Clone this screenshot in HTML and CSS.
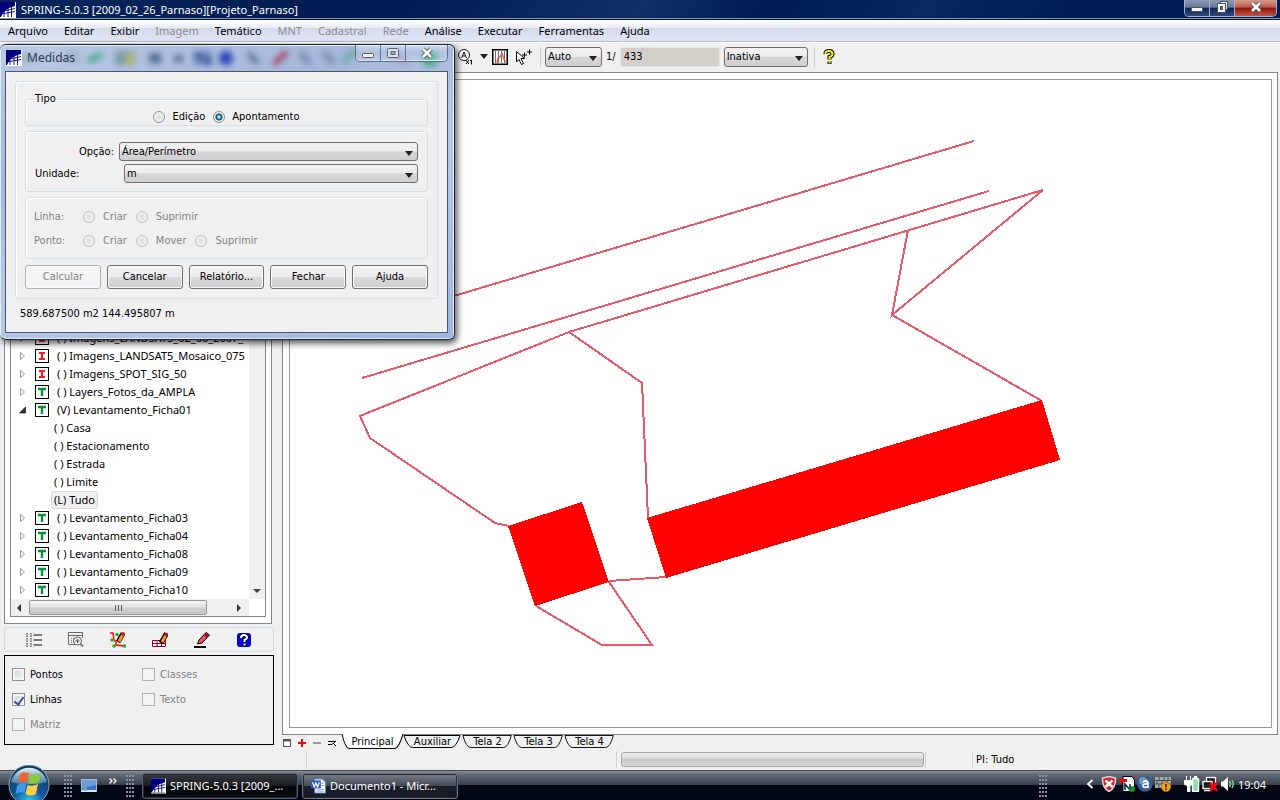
FILE: index.html
```html
<!DOCTYPE html>
<html lang="pt">
<head>
<meta charset="utf-8">
<title>SPRING-5.0.3</title>
<link rel="stylesheet" href="styles.css">
</head>
<body>
<svg class="defs" aria-hidden="true">
  <symbol id="logo" viewBox="0 0 16 16"><rect width="16" height="16" fill="#fff"/><rect width="15" height="15" fill="#00007c"/><path d="M1 15Q3 7 15 4V15Z" fill="#fff"/><path d="M4 8.500V15M8 5.500V15M11.500 4.500V15M1 12L15 9.500M4 9L15 6.500" stroke="#00007c" stroke-width=".9" fill="none"/></symbol>
  <symbol id="t" viewBox="0 0 14 14"><rect x=".5" y=".5" width="13" height="13" fill="#fff" stroke="#000"/><path d="M3 4H11M7 4V11" stroke="#0a9038" stroke-width="2.400"/></symbol>
  <symbol id="i" viewBox="0 0 14 14"><rect x=".5" y=".5" width="13" height="13" fill="#fff" stroke="#000"/><path d="M4 4H10M7 4V10M4 10H10" stroke="#ee2028" stroke-width="2.200"/></symbol>
  <symbol id="closed" viewBox="0 0 8 10"><path d="M1.500 1.500V8.500L5.500 5Z" fill="#fff" stroke="#999"/></symbol>
  <symbol id="open" viewBox="0 0 8 10"><path d="M6.500 2V8H.5Z" fill="#333" stroke="#000" stroke-width=".6"/></symbol>
  <symbol id="min" viewBox="0 0 14 12"><rect x="1.500" y="6.500" width="11" height="4" rx="1" fill="#f4f4f4" stroke="#4c5261"/></symbol>
  <symbol id="cross" viewBox="0 0 14 12"><path d="M3 2L11 10M11 2L3 10" stroke="#4c5261" stroke-width="4.500"/><path d="M3 2L11 10M11 2L3 10" stroke="#fff" stroke-width="2.600"/></symbol>
</svg>

<header class="titlebar">
  <svg class="logo"><use href="#logo"/></svg>
  <span>SPRING-5.0.3 [2009_02_26_Parnaso][Projeto_Parnaso]</span>
  <div class="controls controls-main">
    <button aria-label="Minimizar"><svg><use href="#min"/></svg></button>
    <button aria-label="Restaurar"><svg viewBox="0 0 14 12"><rect x="5.500" y=".5" width="7" height="8" fill="#eee" stroke="#4c5261"/><rect x="2.500" y="2.500" width="8" height="9" fill="#f5f5f5" stroke="#4c5261"/><rect x="5.500" y="5.500" width="2" height="3" fill="#889" stroke="#4c5261"/></svg></button>
    <button class="close" aria-label="Fechar janela"><svg><use href="#cross"/></svg></button>
  </div>
</header>

<nav class="menubar">
  <button>Arquivo</button><button>Editar</button><button>Exibir</button><button disabled>Imagem</button><button>Temático</button><button disabled>MNT</button><button disabled>Cadastral</button><button disabled>Rede</button><button>Análise</button><button>Executar</button><button>Ferramentas</button><button>Ajuda</button>
</nav>

<div class="toolbar">
  <button class="tool" aria-label="Ampliar escala"><svg class="ico16" viewBox="0 0 16 16"><circle cx="6" cy="6" r="5.500" fill="#fff" stroke="#111"/><path d="M3.500 9L6 3L8.500 9M4.500 7H7.500" fill="none" stroke="#111"/><path d="M8 11L11 15M11 11L8 15M12 12L13.500 11V15.500" stroke="#111" fill="none"/></svg></button>
  <button class="tool drop" aria-label="Mais escalas"></button>
  <button class="tool" aria-label="Histograma"><svg class="ico16" viewBox="0 0 16 16"><rect x=".75" y=".75" width="14.500" height="14.500" fill="#fff" stroke="#000" stroke-width="1.500"/><path d="M3.500 2V14M6.500 2V14M9.500 2V14M12.500 2V14" stroke="#5565b8"/><path d="M5 14L6 9L8 8L10 4L12 10L13.500 13" fill="none" stroke="#e8631c" stroke-width="1.400"/></svg></button>
  <button class="tool" aria-label="Cursor de pontos"><svg class="ico16" viewBox="0 0 16 16"><path d="M.5 2.500V13L3 10.500L5.500 15.500L7.500 14.500L5 9.500H8.500Z" fill="#fff" stroke="#000"/><path d="M6 6H11M8.500 3.500V8.500M11 3H16M13.500 .5V5.500" stroke="#000"/></svg></button>
  <i class="sep"></i>
  <span class="combo scale"><select aria-label="Escala"><option>Auto</option></select></span>
  <label for="den">1/</label>
  <input id="den" class="den" value="433">
  <span class="combo state"><select aria-label="Estado"><option>Inativa</option></select></span>
  <i class="sep"></i>
  <button class="tool" aria-label="Ajuda contextual"><svg class="help" viewBox="0 0 12 16"><path d="M2.500 5Q2 2 6 2Q9.500 2 9.500 5Q9.500 7 6.500 8V10.500M6.500 12.500V15" fill="none" stroke="#000" stroke-width="4"/><path d="M2.500 5Q2 2 6 2Q9.500 2 9.500 5Q9.500 7 6.500 8V10.500M6.500 12.500V14.500" fill="none" stroke="#fff000" stroke-width="2"/></svg></button>
</div>

<main class="workspace">
  <aside class="side">
    <section class="treeframe">
      <div class="treebox">
        <div class="treeview">
          <ul class="tree">
            <li><svg class="tw"><use href="#closed"/></svg><svg class="cat"><use href="#i"/></svg>( ) Imagens_LANDSAT5_02_06_2007_</li>
            <li><svg class="tw"><use href="#closed"/></svg><svg class="cat"><use href="#i"/></svg>( ) Imagens_LANDSAT5_Mosaico_075</li>
            <li><svg class="tw"><use href="#closed"/></svg><svg class="cat"><use href="#i"/></svg>( ) Imagens_SPOT_SIG_50</li>
            <li><svg class="tw"><use href="#closed"/></svg><svg class="cat"><use href="#t"/></svg>( ) Layers_Fotos_da_AMPLA</li>
            <li><svg class="tw"><use href="#open"/></svg><svg class="cat"><use href="#t"/></svg>(V) Levantamento_Ficha01</li>
            <li class="child"><span>( ) Casa</span></li>
            <li class="child"><span>( ) Estacionamento</span></li>
            <li class="child"><span>( ) Estrada</span></li>
            <li class="child"><span>( ) Limite</span></li>
            <li class="child"><span class="selected">(L) Tudo</span></li>
            <li><svg class="tw"><use href="#closed"/></svg><svg class="cat"><use href="#t"/></svg>( ) Levantamento_Ficha03</li>
            <li><svg class="tw"><use href="#closed"/></svg><svg class="cat"><use href="#t"/></svg>( ) Levantamento_Ficha04</li>
            <li><svg class="tw"><use href="#closed"/></svg><svg class="cat"><use href="#t"/></svg>( ) Levantamento_Ficha08</li>
            <li><svg class="tw"><use href="#closed"/></svg><svg class="cat"><use href="#t"/></svg>( ) Levantamento_Ficha09</li>
            <li><svg class="tw"><use href="#closed"/></svg><svg class="cat"><use href="#t"/></svg>( ) Levantamento_Ficha10</li>
          </ul>
          <div class="vscroll"><i class="arrow down"></i></div>
        </div>
        <div class="hscroll"><i class="arrow left"></i><div class="thumb"><i></i><i></i><i></i></div><i class="arrow right"></i></div>
      </div>
    </section>
    <div class="sidetools">
      <button class="tool" aria-label="Lista"><svg class="ico16" viewBox="0 0 16 16"><path d="M.5 1.500H2M4 1.500H5.500M.5 4.500H2M4 4.500H5.500M.5 6.500H2M4 6.500H5.500M.5 9.500H2M4 9.500H5.500M.5 11.500H2M4 11.500H5.500M.5 14.500H2M4 14.500H5.500M1 1V5M5 1V5M1 6V10M5 6V10M1 11V15M5 11V15" stroke="#777"/><path d="M7.500 3H16M7.500 8H16M7.500 13H16" stroke="#555" stroke-width="1.600"/></svg></button>
      <button class="tool" aria-label="Consultar tabela"><svg class="ico16" viewBox="0 0 16 16"><path d="M.5 .5H14.500V6M.5 .5V12.500H8M.5 3.500H14.500" fill="none" stroke="#666"/><path d="M3 6.500H7M3 8.500H6M3 10.500H6" stroke="#777" stroke-dasharray="1 1"/><circle cx="9.500" cy="9" r="4" fill="#eee" stroke="#666"/><path d="M7.500 9H11.500M9.500 7V11" stroke="#555"/><path d="M12.500 12L15 14.500" stroke="#777" stroke-width="2"/></svg></button>
      <button class="tool" aria-label="Editar vetores"><svg class="ico16" viewBox="0 0 16 16"><path d="M0 1H3L4 8L6 10V13L14 14" fill="none" stroke="#f00" stroke-width="1.500"/><g fill="#19b32d"><circle cx="7" cy="2.500" r="1.800"/><circle cx="2" cy="8" r="1.800"/><circle cx="4" cy="14" r="1.800"/><circle cx="14.500" cy="14" r="1.800"/></g><path d="M8 10L13 1.500" stroke="#000" stroke-width="5"/><path d="M9 9.500L13 2" stroke="#ff941c" stroke-width="3"/><path d="M12 3.500L14 .5" stroke="#b3261a" stroke-width="3"/></svg></button>
      <button class="tool" aria-label="Editar matriz"><svg class="ico16" viewBox="0 0 16 16"><path d="M.5 8.500H13.500V14.500H.5ZM.5 11.500H13.500M5 8.500V14.500M9.500 8.500V14.500" fill="#fff" stroke="#a00020"/><path d="M9 11L14.500 1.500" stroke="#000" stroke-width="5"/><path d="M10 10L14 3" stroke="#ff941c" stroke-width="3"/><path d="M13.500 4L15 1" stroke="#b3261a" stroke-width="3"/></svg></button>
      <button class="tool" aria-label="Editar"><svg class="ico16" viewBox="0 0 16 16"><path d="M0 15H12" stroke="#000" stroke-width="2"/><path d="M3.500 12L5 8L12 .5L15.500 3L8 11Z" fill="#f35460" stroke="#000"/><path d="M10 3L12 1L15 3L12.500 6Z" fill="#b0001c"/></svg></button>
      <button class="tool" aria-label="Ajuda"><svg class="ico16" viewBox="0 0 16 16"><rect x="1" y="1" width="14" height="14" rx="3" fill="#0000e0"/><path d="M5 6Q5 3 8 3Q11 3 11 5.500Q11 7 8.500 8V10M8.500 11.500V14" fill="none" stroke="#000" stroke-width="3.600"/><path d="M5 6Q5 3 8 3Q11 3 11 5.500Q11 7 8.500 8V10M8.500 11.500V13.500" fill="none" stroke="#fff" stroke-width="2"/></svg></button>
    </div>
    <fieldset class="layers">
      <label><input type="checkbox">Pontos</label>
      <label class="off"><input type="checkbox" disabled>Classes</label>
      <label><input type="checkbox" checked>Linhas</label>
      <label class="off"><input type="checkbox" disabled>Texto</label>
      <label class="off"><input type="checkbox" disabled>Matriz</label>
    </fieldset>
  </aside>

  <section class="view">
    <div class="mapframe"><div class="map">
      <svg viewBox="290 80 981 647" preserveAspectRatio="xMinYMin slice" shape-rendering="crispEdges">
        <g fill="none" stroke="#e65966" stroke-width="2">
          <path d="M974 141L400 312M989 191L362 378"/>
          <path d="M1043 190L569 332L360 416L370 438L495 523L509 526M569 332L642 383L648 518"/>
          <path d="M908 230L892 315L1043 190M892 315L1042 401"/>
          <path d="M609 581L666 577M609 582L652 645H602L536 606"/>
        </g>
        <g fill="#f00"><path d="M647 518L1042 400L1060 460L666 578Z"/><path d="M508 526L582 502L609 582L535 606Z"/></g>
      </svg>
    </div></div>
    <div class="tabs">
      <button class="mini" aria-label="Janela"><svg viewBox="0 0 10 10"><rect x="1.500" y="1.500" width="7" height="7" fill="#fff" stroke="#555"/><path d="M1 2.500H9" stroke="#555" stroke-width="2"/></svg></button>
      <button class="mini" aria-label="Adicionar tela"><svg viewBox="0 0 10 10"><path d="M1 5H9M5 1V9" stroke="#f00" stroke-width="2"/></svg></button>
      <button class="mini" aria-label="Remover tela"><svg viewBox="0 0 10 10"><path d="M1 5H9" stroke="#999" stroke-width="2"/></svg></button>
      <button class="mini" aria-label="Alternar"><svg viewBox="0 0 10 10"><path d="M1 3.500H9M1 6.500H5L8 4M6 5L9 8" stroke="#000" fill="none"/></svg></button>
      <button class="tab active"><svg preserveAspectRatio="none" viewBox="0 0 60 14"><path d="M0 -1Q3 13 7 13.500H52Q56 13 60 -1" fill="#fff" stroke="#000"/></svg><span>Principal</span></button>
      <button class="tab aux"><svg preserveAspectRatio="none" viewBox="0 0 60 14"><path d="M1 .5Q5 12.500 10 12.500H49Q54 12.500 58 .5Z" fill="#f0f0f0" stroke="#000"/></svg><span>Auxiliar</span></button>
      <button class="tab"><svg preserveAspectRatio="none" viewBox="0 0 60 14"><path d="M1 .5Q5 12.500 10 12.500H49Q54 12.500 58 .5Z" fill="#f0f0f0" stroke="#000"/></svg><span>Tela 2</span></button>
      <button class="tab"><svg preserveAspectRatio="none" viewBox="0 0 60 14"><path d="M1 .5Q5 12.500 10 12.500H49Q54 12.500 58 .5Z" fill="#f0f0f0" stroke="#000"/></svg><span>Tela 3</span></button>
      <button class="tab"><svg preserveAspectRatio="none" viewBox="0 0 60 14"><path d="M1 .5Q5 12.500 10 12.500H49Q54 12.500 58 .5Z" fill="#f0f0f0" stroke="#000"/></svg><span>Tela 4</span></button>
    </div>
  </section>
</main>

<footer class="status">
  <i class="cell c1"></i><i class="cell c2"></i>
  <div class="cell c3"><div class="progress" role="progressbar" aria-label="Progresso"></div></div>
  <i class="cell c4"></i>
  <span class="cell c5">PI: Tudo</span>
</footer>

<div class="taskbar">
  <button class="orb" aria-label="Iniciar"><svg viewBox="0 0 42 36">
    <defs><radialGradient id="og" cx=".5" cy=".95" r=".85"><stop offset="0" stop-color="#3ad6ff"/><stop offset=".45" stop-color="#11599a"/><stop offset="1" stop-color="#12395e"/></radialGradient><linearGradient id="os" x2="0" y2="1"><stop stop-color="#e8f4fb"/><stop offset="1" stop-color="#6d9bbd" stop-opacity=".6"/></linearGradient></defs>
    <circle cx="21" cy="20" r="20" fill="url(#og)" stroke="#8da9bd"/><path d="M3 17A18.500 18.500 0 0 1 39 17Q21 22 3 17Z" fill="url(#os)"/>
    <path d="M12 9Q16 6 21 8L19 17Q14 15 10 18Z" fill="#f2642a"/><path d="M22 9Q27 11 33 8L31 17Q25 20 20 18Z" fill="#8dc63f"/><path d="M9.500 20Q14 17 18.500 19L16.500 28Q12 26 7.500 29Z" fill="#3f9be8"/><path d="M19.500 20Q24 22 30 19L28 29Q22 32 17.500 29Z" fill="#fdd045"/></svg></button>
  <i class="grip"></i>
  <button class="quick" aria-label="Mostrar área de trabalho"><svg viewBox="0 0 16 14"><rect x=".5" y=".5" width="15" height="12" fill="#3d6fc4" stroke="#a9bedb"/><path d="M1 1H15V6L1 9Z" fill="#6d9be0"/><rect x="1" y="11" width="14" height="2" fill="#d9e4ee"/><circle cx="4" cy="10" r="2" fill="#2ac0e8"/><circle cx="4" cy="10" r="1" fill="#f90"/></svg></button>
  <button class="chev" aria-label="Mais atalhos"><svg viewBox="0 0 8 6"><path d="M.5 .5L3 3L.5 5.500M4.500 .5L7 3L4.500 5.500" fill="none" stroke="#fff" stroke-width="1.300"/></svg></button>
  <i class="grip"></i>
  <button class="task current"><svg><use href="#logo"/></svg><span>SPRING-5.0.3 [2009_...</span></button>
  <button class="task"><svg viewBox="0 0 16 16"><path d="M4 .5H12L15.500 4V15.500H4Z" fill="#fff" stroke="#5a86cf"/><path d="M11 5H14M11 7.500H14M6 11.500H14M6 13.500H14" stroke="#79a0dd"/><rect x="0" y="2" width="10.500" height="8.500" fill="#2f5fbd"/><path d="M1.500 4L3.500 9L5.200 4.500L7 9L9 4" fill="none" stroke="#fff" stroke-width="1.200"/></svg><span>Documento1 - Micr...</span></button>
  <i class="grip push"></i>
  <div class="tray">
    <svg class="back" viewBox="0 0 8 10"><path d="M6.500 1L2 5L6.500 9" fill="none" stroke="#fff" stroke-width="1.800"/></svg>
    <svg viewBox="0 0 16 16"><path d="M8 .5L14.500 2Q15 12 8 15.500Q1 12 1.500 2Z" fill="#d2222a" stroke="#d8d8d8" stroke-width="1.500"/><path d="M4.500 4.500L11.500 11M11.500 4.500L4.500 11" stroke="#fff" stroke-width="2.400"/></svg>
    <svg viewBox="0 0 16 16"><path d="M5 .5H13L15.500 4V15.500H4V.5Z" fill="#fff" stroke="#000"/><rect x="0" y="3" width="8" height="3" fill="#f00"/><path d="M6 14V8L11 14V8" fill="none" stroke="#16163f" stroke-width="1.500"/><circle cx="13" cy="13" r="3" fill="#118a2e"/></svg>
    <svg viewBox="0 0 16 16"><circle cx="8" cy="8" r="7.800" fill="#315f91"/><circle cx="6" cy="5" r="4" fill="#6e96bf"/><path d="M6 6Q10.500 3.500 11 7V12M11 8Q6 7.500 6 10Q6.500 12.500 11 10.500" fill="none" stroke="#fff" stroke-width="1.800"/></svg>
    <svg viewBox="0 0 16 16"><path d="M0 1H16V12H0Z" fill="#a8abae"/><path d="M0 4.500H16M0 8H16M4 1V4.500M9 1V4.500M13 1V4.500M2 4.500V8M7 4.500V8M12 4.500V8M4 8V12" stroke="#41464d"/><circle cx="11" cy="11" r="4.700" fill="#f0a01a" stroke="#9b6000" stroke-width=".5"/><path d="M11 8V11.500M11 12.500V14" stroke="#3d2b00" stroke-width="1.600"/></svg>
    <svg class="gap" viewBox="0 0 16 16"><path d="M2.500 0V4M6.500 0V4M0 4.500H9V8L6 10V16H3.500V10L0 8Z" fill="#fff" stroke="#eee"/><rect x="8.500" y="2.500" width="6" height="13" rx="1" fill="#8de0a2" stroke="#fff" stroke-width="1.500"/><path d="M10 1H13" stroke="#fff" stroke-width="2"/></svg>
    <svg viewBox="0 0 16 16"><rect x="4.500" y="1.500" width="9" height="8" fill="#222" stroke="#fff" stroke-width="1.300"/><rect x="1" y="5.500" width="9" height="7" fill="#222" stroke="#fff" stroke-width="1.300"/><path d="M2 14.500H9" stroke="#fff" stroke-width="1.500"/><path d="M8 7L15 14.500M15 7L8 14.500" stroke="#f00" stroke-width="2.600"/></svg>
    <svg viewBox="0 0 16 16"><path d="M1 5.500H3L8 1V15L3 10.500H1Z" fill="#fff"/><path d="M9.500 5Q11.500 8 9.500 11M12 4Q14.500 8 12 12" fill="none" stroke="#7be29a" stroke-width="1.400"/></svg>
    <time>19:04</time>
  </div>
</div>

<div class="dialog" role="dialog" aria-labelledby="dlg">
  <svg class="ghost" viewBox="0 0 454 27" aria-hidden="true"><g>
    <path d="M16 10H34V18H16ZM64 6H78V18H64Z" fill="#75939c" opacity=".4"/><path d="M86 15L100 7L104 10L92 18Z" fill="#35a378"/><rect x="115" y="6" width="20" height="14" fill="#7c9ea4"/><path d="M127 10H133V19H127Z" fill="#ccc04d"/><path d="M149 8H161V18H149ZM174 10H183V17H174Z" fill="#536b94"/><rect x="194" y="6" width="18" height="14" fill="#6f88bd"/><path d="M194 8H202V14H194ZM204 13H212V20H204Z" fill="#3c5596"/><circle cx="226" cy="13" r="7" fill="#2a43b8"/><path d="M248 8L258 18" stroke="#445b84" stroke-width="4"/><path d="M274 19L287 7" stroke="#aa3150" stroke-width="5"/><path d="M300 8L310 18M324 8L334 18" stroke="#5d719a" stroke-width="4"/><path d="M345 18Q348 8 356 8" fill="none" stroke="#50a28b" stroke-width="4"/><path d="M392 8L407 18" stroke="#a98296" stroke-width="4"/><circle cx="430" cy="14" r="8" fill="#49aa83"/></g></svg>
  <div class="dlgtitle"><svg class="logo"><use href="#logo"/></svg><span id="dlg">Medidas</span>
    <div class="controls controls-dlg">
      <button aria-label="Minimizar"><svg><use href="#min"/></svg></button>
      <button aria-label="Maximizar"><svg viewBox="0 0 14 12"><rect x="1.500" y="1.500" width="11" height="9" rx="1" fill="#d9deea" stroke="#59647a"/><rect x="5" y="4.500" width="4" height="3" fill="#a4aec6" stroke="#59647a"/></svg></button>
      <button class="x" aria-label="Fechar"><svg><use href="#cross"/></svg></button>
    </div>
  </div>
  <form class="dlgbody">
    <div class="outer">
      <fieldset class="group tipo"><legend>Tipo</legend>
        <label><input type="radio" name="tipo">Edição</label>
        <label><input type="radio" name="tipo" checked>Apontamento</label>
      </fieldset>
      <div class="group options">
        <div class="field"><label class="op" for="op">Opção:</label><span class="combo"><select id="op"><option>Área/Perímetro</option></select></span></div>
        <div class="field"><label class="un" for="un">Unidade:</label><span class="combo"><select id="un"><option>m</option></select></span></div>
      </div>
      <div class="group edit">
        <div class="radios"><span>Linha:</span><label><input type="radio" name="linha" disabled>Criar</label><label><input type="radio" name="linha" disabled>Suprimir</label></div>
        <div class="radios"><span>Ponto:</span><label><input type="radio" name="ponto" disabled>Criar</label><label><input type="radio" name="ponto" disabled>Mover</label><label><input type="radio" name="ponto" disabled>Suprimir</label></div>
      </div>
      <div class="actions"><button type="button" disabled>Calcular</button><button type="button">Cancelar</button><button type="button">Relatório...</button><button type="button">Fechar</button><button type="button">Ajuda</button></div>
    </div>
    <output class="result">589.687500 m2 144.495807 m</output>
  </form>
</div>
</body>
</html>
```
FILE: styles.css
```css
* { box-sizing: border-box; }
body {
  --segoe: "Noto Sans", "Open Sans", sans-serif;
  --tahoma: "DejaVu Sans Condensed", "DejaVu Sans", sans-serif;
  margin: 0; height: 100vh; display: flex; flex-direction: column; overflow: hidden;
  background: #f0f0f0; color: #000; font: 11px/16px var(--tahoma);
}
button, input, select { font: inherit; color: inherit; margin: 0; padding: 0; }
button { background: none; border: 0; white-space: nowrap; }
svg { display: block; flex: none; }
.defs { position: absolute; width: 0; height: 0; }
.logo { width: 16px; height: 16px; }

.titlebar {
  flex: none; height: 20px; display: flex; gap: 5px; padding: 2px 3px 0 0;
  background: linear-gradient(120deg, #06265c, #001b52 30%, #102f66 50%, #001b52 60%, #082860 72%, #001b52 85%);
  border-bottom: 1px solid #111722; box-shadow: inset 0 -1px #8493b3;
  color: #fff; font: 11px/16px var(--segoe);
}
.controls { display: flex; margin-left: auto; border: 1px solid #a9b3c8; border-top: 0; border-radius: 0 0 5px 5px; overflow: hidden; }
.controls button { display: grid; place-items: center; width: 25px; border-right: 1px solid #a9b3c8; }
.controls .close, .controls .x { width: 41px; border-right: 0; }
.controls svg { width: 14px; height: 12px; }
.controls-main { height: 17px; margin-top: -2px; }
.controls-main svg { margin-top: -3px; }
.controls-main button { background: linear-gradient(#8b98b4, #6d7da0 45%, #0a2458 50%, #304a7d); }
.controls-main .close { background: linear-gradient(#d99a8e, #bb5a4c 45%, #8c140c 50%, #c25342); }

.menubar {
  flex: none; height: 22px; display: flex; gap: 16px; padding: 0 8px;
  background: linear-gradient(#fff, #e8ecf5 38%, #d4dbed 40%, #e0e6f6);
  border-bottom: 1px solid #b6bccc; font: 11px/22px var(--segoe);
}
.menubar button:disabled { color: #8d8d8d; }

.toolbar {
  flex: none; height: 30px; display: flex; align-items: center; gap: 4px; padding: 0 0 2px 456px;
  background: #f0f0f0; border-top: 1px solid #fff;
}
.tool { display: grid; place-items: center; }
.toolbar .tool { width: 20px; height: 20px; }
.ico16 { width: 16px; height: 16px; }
.help { width: 12px; height: 16px; }
.toolbar .drop { width: 6px; }
.drop::before, .combo::after { content: ""; border: 4px solid transparent; border-top: 5px solid #222; border-bottom: 0; }
.toolbar .sep { width: 1px; height: 20px; margin-left: 2px; background: #ccc; }
.combo { display: flex; position: relative; height: 20px; }
.combo::after { position: absolute; right: 5px; top: 9px; pointer-events: none; }
.combo select {
  appearance: none; width: 100%; padding: 0 2px; border: 1px solid #707070; border-radius: 3px;
  background: linear-gradient(#f3f3f3, #ebebeb 48%, #d6d6d6 52%, #cfcfcf);
}
.scale { width: 57px; }
.state { width: 84px; }
.den { width: 100px; height: 20px; padding: 0 3px; background: #d4d0c8; border: 1px solid #e2e6ee; }

.workspace { flex: 1; min-height: 0; display: flex; gap: 8px; }
.side { flex: none; width: 274px; display: flex; flex-direction: column; gap: 3px; padding: 0 0 4px 4px; }
.treeframe { flex: 1; min-height: 0; display: flex; width: 268px; padding: 6px 5px; background: #fff; border: 1px solid #828790; }
.treebox { flex: 1; min-width: 0; display: flex; flex-direction: column; border: 1px solid #828790; }
.treeview { flex: 1; min-height: 0; display: flex; }
.tree {
  flex: 1; min-width: 0; margin: 0; padding: 0; list-style: none; overflow: hidden;
  display: flex; flex-direction: column; justify-content: flex-end; font: 11px/18px var(--segoe);
}
.tree li { flex: none; height: 18px; display: flex; align-items: center; padding-left: 8px; white-space: nowrap; }
.tw { width: 8px; height: 10px; margin-right: 8px; }
.cat { width: 14px; height: 14px; margin-right: 8px; }
.tree .child { padding-left: 40px; }
.child span { padding: 0 2px; border: 1px solid transparent; line-height: 16px; }
.child .selected { background: #f0f0f0; border-color: #d5d5d5; border-radius: 3px; }
.vscroll { width: 16px; display: flex; justify-content: center; align-items: flex-end; padding-bottom: 6px; background: #f0f0f0; }
.arrow { border: 4px solid transparent; }
.down { border-top-color: #444; border-bottom: 0; }
.left { border-right-color: #333; border-left: 0; }
.right { border-left-color: #333; border-right: 0; }
.hscroll { height: 17px; display: flex; align-items: center; padding: 1px 24px 1px 6px; background: linear-gradient(90deg, #f0f0f0 238px, #fff 238px); }
.thumb { width: 178px; height: 15px; margin: 0 auto 0 8px; display: flex; gap: 2px; justify-content: center; align-items: center; border: 1px solid #959595; border-radius: 2px; background: linear-gradient(#f3f3f3, #e4e4e4 48%, #d0d0d0 52%, #c8c8c8); }
.thumb i { width: 1px; height: 6px; background: #555; }
.sidetools { flex: none; width: 270px; height: 25px; display: flex; gap: 26px; padding-left: 21px; border: 1px solid #d0dbe4; border-radius: 3px; }
.layers { flex: none; margin: 0; width: 270px; height: 90px; padding: 6px 7px 5px; border: 1px solid #000; display: grid; grid-template-columns: 130px 1fr; grid-auto-rows: 25px; align-items: center; }
.layers label { display: flex; align-items: center; gap: 5px; }
.off, .edit, .actions button:disabled { color: #838383; }
input[type=checkbox] { appearance: none; width: 13px; height: 13px; border: 1px solid #8e8f8f; background: linear-gradient(135deg, #cfd3d6, #f6f6f6); box-shadow: inset 0 0 0 2px #f4f4f4; display: grid; place-items: center; }
input[type=checkbox]:checked::before { content: ""; width: 4px; height: 8px; border: solid #32508f; border-width: 0 2px 2px 0; transform: rotate(35deg); }
input[type=checkbox]:disabled { border-color: #b1b1b1; background: #f4f4f4; }

.view { flex: 1; min-width: 0; display: flex; flex-direction: column; padding-right: 2px; }
.mapframe { flex: 1; min-height: 0; display: flex; padding: 6px 5px 6px 6px; background: #fff; border: 1px solid #828790; }
.map { flex: 1; min-width: 0; border: 1px solid #9a9a9a; }
.map svg { width: 100%; height: 100%; }
.tabs { flex: none; height: 14px; display: flex; }
.mini { width: 15px; height: 14px; padding: 2px 0 0; }
.mini svg { width: 10px; height: 10px; }
.tab { display: grid; width: 51px; height: 14px; text-align: center; line-height: 14px; }
.tab svg, .tab span { grid-area: 1 / 1; }
.tab svg { width: 100%; height: 14px; overflow: visible; }
.tab span { position: relative; }
.tab.active { width: 61px; }
.tab.aux { width: 59px; }

.status { flex: none; height: 21px; display: flex; padding: 2px 0; line-height: 18px; }
.cell { border-right: 1px solid #d0d0d0; }
.c1 { width: 307px; }
.c2 { flex: 1; max-width: 310px; }
.c3 { width: 309px; padding: 1px 1px 1px 4px; }
.c4 { width: 47px; }
.c5 { border: 0; padding-left: 3px; }
.progress { height: 15px; border: 1px solid #a5a5a5; border-radius: 3px; background: linear-gradient(#eee, #ddd 40%, #c8c8c8 50%, #d5d5d5); }

.taskbar {
  flex: none; height: 30px; display: flex; align-items: center; padding: 0 14px 0 8px;
  background: linear-gradient(#8b9099, #646a75 12%, #3a404b 47%, #020814 50%, #000613); border-top: 1px solid #41474f;
  color: #fff; font: 11px/16px var(--segoe);
}
.orb { width: 42px; height: 36px; margin: -6px 5px 0 0; z-index: 1; }
.orb svg { width: 42px; height: 36px; }
.grip { width: 9px; height: 22px; margin-left: 9px; background: radial-gradient(circle at 1px 1px, #8b929c 1px, transparent 1px) 0 0 / 3px 4px; }
.quick { margin-left: 8px; }
.quick svg { width: 16px; height: 14px; }
.chev { margin: -10px 0 0 12px; }
.chev svg { width: 8px; height: 6px; }
.task {
  flex: 0 1 156px; min-width: 0; height: 26px; margin-left: 4px; padding: 0 8px; display: flex; align-items: center; gap: 4px;
  border: 1px solid #6d737c; border-radius: 3px; box-shadow: inset 0 0 0 1px #252b35;
  background: linear-gradient(#797e87, #454b56 48%, #1a1f2a 52%, #141923); overflow: hidden;
}
.task.current { margin-left: 7px; background: linear-gradient(#34373c, #1b1d21 48%, #030407 52%, #0a0c10); border-color: #555b64; }
.task svg { width: 15px; height: 16px; }
.push { margin-left: auto; }
.tray { display: flex; align-items: center; gap: 2px; padding-left: 38px; margin-top: -4px; }
.tray svg { width: 16px; height: 16px; }
.tray .back { width: 8px; height: 10px; margin-right: 5px; }
.tray .gap { margin-left: 11px; }
.tray time { margin: 3px 0 0; }

.dialog {
  position: absolute; left: 0; top: 44px; width: 455px; padding: 0 6px 6px 5px; border: 1px solid #1b2433; border-left-width: 0;
  border-radius: 6px; background: linear-gradient(160deg, #bccbe5, #a4b8db 30%, #b8c9e7 55%, #9db5df);
  box-shadow: inset 0 0 0 1px #e4ecf8, 2px 3px 7px rgba(0,0,0,.7);
}
.ghost { position: absolute; left: 0; top: 0; width: 454px; height: 27px; }
.ghost g { filter: blur(3px); }
.dlgtitle { position: relative; height: 26px; display: flex; align-items: center; gap: 5px; padding-left: 1px; color: #333b4b; font: 12px/16px var(--segoe); }
.controls-dlg { align-self: flex-start; height: 17px; border-color: #5d6c88; box-shadow: inset 0 -1px #d7e1f2; }
.controls-dlg button { border-color: #64738e; background: linear-gradient(rgba(255,255,255,.45), rgba(255,255,255,.1) 50%, rgba(255,255,255,.25)); }
.dlgbody { position: relative; padding: 9px 9px 10px; background: #f0f0f0; border: 1px solid #4c586e; }
.outer { padding: 10px 9px 9px; border: 1px solid #d5dfe8; border-radius: 3px; box-shadow: inset 1px 1px #fff; }
.group { margin: 0 0 5px; border: 1px solid #d5dfe8; border-radius: 3px; box-shadow: inset 1px 1px #fff; }
.group label, .radios { display: flex; align-items: center; }
.tipo { height: 34px; padding: 3px 8px 0; display: flex; justify-content: center; gap: 8px; align-items: flex-start; }
.tipo legend { padding: 0 1px; line-height: 14px; height: 14px; }
.tipo label { gap: 7px; }
.options { height: 61px; padding: 10px 9px; display: flex; flex-direction: column; gap: 3px; }
.field { display: flex; align-items: center; height: 20px; }
.field .combo { flex: 1; height: 19px; }
.field .op { width: 84px; justify-content: flex-end; padding-right: 5px; }
.field .un { width: 89px; }
.edit { height: 62px; padding: 7px 8px; }
.radios { height: 24px; gap: 9px; }
.radios span { width: 40px; }
.radios label { gap: 8px; }
input[type=radio] { appearance: none; width: 12px; height: 12px; border: 1px solid #8e8f8f; border-radius: 50%; background: radial-gradient(#d9dcdf, #fafafa); }
input[type=radio]:checked { background: radial-gradient(circle at 50% 50%, #8ce0f8 0 1px, #10405e 3px, #eee 4px); }
input[type=radio]:disabled { border-color: #c0c0c0; }
.actions { display: grid; grid-template-columns: repeat(5, 1fr); gap: 6px; padding-top: 1px; }
.actions button { height: 24px; border: 1px solid #707070; border-radius: 3px; box-shadow: inset 0 0 0 1px #fafafa; background: linear-gradient(#f3f3f3, #ebebeb 48%, #dadada 52%, #cfcfcf); }
.actions button:disabled { border-color: #adb2b5; background: #f4f4f4; }
.result { display: block; padding: 7px 5px 0; }
```
